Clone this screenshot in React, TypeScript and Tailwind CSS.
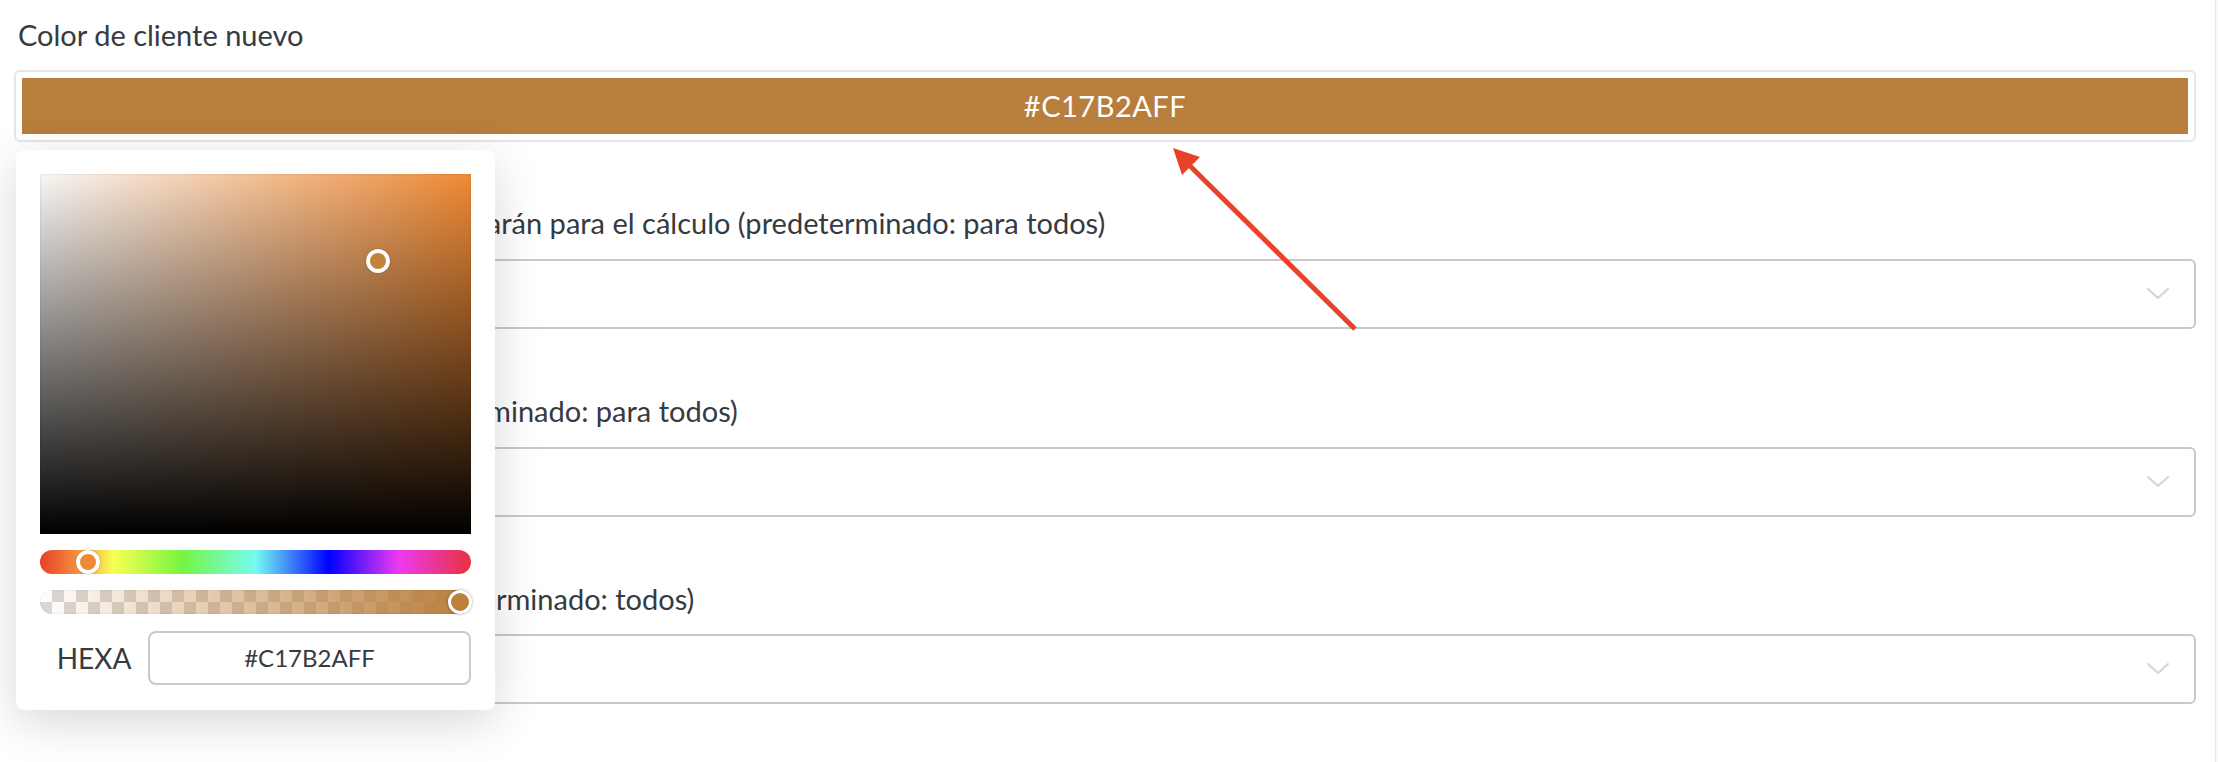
import React from "react";

function Chevron() {
  return (
    <svg width="24" height="14" viewBox="0 0 24 14" fill="none">
      <path d="M2 2 L12 11 L22 2" stroke="#d4d4d4" strokeWidth="2" strokeLinecap="round" strokeLinejoin="round" />
    </svg>
  );
}

function SelectBox() {
  return (
    <div className="ml-[10px] h-[70px] border-2 border-[#c9c9c9] rounded-[6px] bg-white flex items-center justify-end pr-[24px]">
      <Chevron />
    </div>
  );
}

export default function App() {
  return (
    <div className="relative w-[2218px] h-[762px] bg-white overflow-hidden font-['Lato','Noto_Sans',sans-serif] text-[#363a41]">
      <div className="flex h-full">
        <div className="flex-1 pl-[14px] pr-[19px] pt-[15px]">
          <div className="text-[29px] leading-[40px] mb-[15px] pl-[4px]">Color de cliente nuevo</div>
          <div className="h-[72px] border-2 border-[#e6e6e6] rounded-[6px] p-[6px]">
            <div className="h-full bg-[#b77e3c] flex items-center justify-center text-white text-[29px] tracking-[0.5px]">
              #C17B2AFF
            </div>
          </div>

          <div className="mt-[61px] text-[29px] leading-[40px] mb-[16px] pl-[4px] whitespace-nowrap">
            Grupos de clientes que sí se considerarán para el cálculo (predeterminado: para todos)
          </div>
          <SelectBox />

          <div className="mt-[62px] text-[29px] leading-[40px] mb-[16px] pl-[4px] whitespace-nowrap">
            Países de todos los clientes (predeterminado: para todos)
          </div>
          <SelectBox />

          <div className="mt-[62px] text-[29px] leading-[40px] mb-[15px] pl-[4px] whitespace-nowrap">
            Idiomas de todos los clientes (predeterminado: todos)
          </div>
          <SelectBox />
        </div>
        <div className="w-[3px] h-full border-l border-[#e9e9e9] bg-[#fafafa]" />
      </div>

      {/* Color picker popover */}
      <div className="absolute left-[16px] top-[150px] w-[479px] h-[560px] rounded-[8px] bg-white p-[24px] shadow-[0_12px_48px_rgba(0,0,0,0.16)] flex flex-col">
        <div className="relative h-[360px] shrink-0 bg-[linear-gradient(to_top,#000,rgba(0,0,0,0)),linear-gradient(to_right,#f8f6f4,#ee8a35)] shadow-[inset_0_0_2px_rgba(0,0,0,0.2)]">
          <div className="absolute left-[326px] top-[75px] w-[24px] h-[24px] rounded-full border-[4px] border-white bg-[#bf833b] shadow-[0_0_2px_rgba(0,0,0,0.3)]" />
        </div>

        <div className="relative mt-[16px] h-[24px] shrink-0 rounded-full bg-[linear-gradient(to_right,#e8402a_0%,#f28a3a_8%,#f8ff52_17%,#76f542_33%,#76fbf2_50%,#0000ff_67%,#ec3af2_83%,#e8323e_100%)]">
          <div className="absolute left-[36px] top-0 w-[24px] h-[24px] rounded-full border-[4px] border-white bg-[#ee8a35] shadow-[0_0_2px_rgba(0,0,0,0.3)]" />
        </div>

        <div className="relative mt-[16px] h-[24px] shrink-0 rounded-full bg-[linear-gradient(to_right,rgba(193,123,42,0),rgba(185,126,60,1)),conic-gradient(#dcd8d4_25%,#ffffff_0_50%,#dcd8d4_0_75%,#ffffff_0)] [background-size:100%_100%,24px_24px] shadow-[inset_0_0_2px_rgba(0,0,0,0.15)]">
          <div className="absolute left-[408px] top-0 w-[24px] h-[24px] rounded-full border-[3px] border-white bg-[#bc8038] shadow-[0_0_3px_rgba(0,0,0,0.35)]" />
        </div>

        <div className="mt-[17px] h-[54px] shrink-0 flex items-center">
          <div className="w-[108px] text-center text-[28px]">HEXA</div>
          <div className="flex-1 h-full border-2 border-[#cacaca] rounded-[8px] flex items-center justify-center text-[24px]">
            #C17B2AFF
          </div>
        </div>
      </div>

      {/* Annotation arrow */}
      <svg className="absolute left-0 top-0 pointer-events-none" width="2218" height="762" viewBox="0 0 2218 762">
        <line x1="1355" y1="329" x2="1187" y2="163" stroke="#e8432a" strokeWidth="5" />
        <polygon points="1173,148 1182,175 1200,157" fill="#e8432a" />
      </svg>
    </div>
  );
}
